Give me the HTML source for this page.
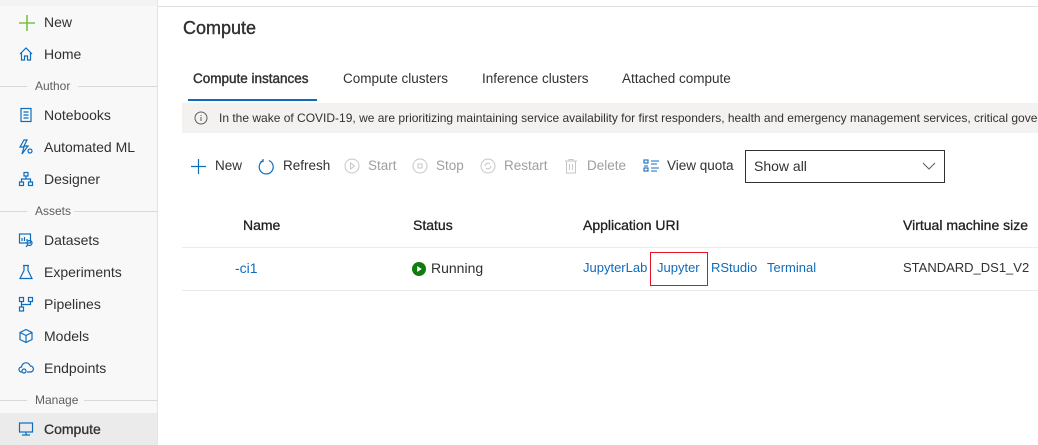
<!DOCTYPE html>
<html><head><meta charset="utf-8"><style>
*{margin:0;padding:0;box-sizing:border-box}
body{width:1038px;height:445px;overflow:hidden;background:#fff;font-family:"Segoe UI","Liberation Sans",sans-serif;color:#323130;position:relative}
.abs{position:absolute;white-space:nowrap}
#side{position:absolute;left:0;top:0;width:158px;height:445px;background:#f8f8f8;border-right:1px solid #e4e4e4}
.it{position:absolute;left:0;width:157px;height:32px;font-size:14px;line-height:32px;padding-left:44px;color:#323130}
.it svg{position:absolute;left:18px;top:8px}
.lbl{position:absolute;left:0;width:157px;font-size:12px;color:#605e5c;line-height:14px}
.lbl:before{content:"";position:absolute;left:0;top:7px;width:27px;border-top:1px solid #d8d8d8}
.lbl span{position:absolute;left:35px;top:0}
.lbl i{position:absolute;top:7px;right:0;border-top:1px solid #d8d8d8}
.tb{position:absolute;top:157px;font-size:13.5px;line-height:18px}
.tb svg{position:absolute;left:0;top:1px}
.dis{color:#a19f9d}
a{color:#0f6cbd;text-decoration:none}
.th{font-size:14px;color:#201f1e;-webkit-text-stroke:0.3px #201f1e}
</style></head><body>
<div id="side">
<div style="position:absolute;left:0;top:0;width:157px;height:6px;background:#f3f3f3"></div>
<div class="it" style="top:6px"><svg width="18" height="18" viewBox="0 0 18 18"><path d="M9 1v16M1 9h16" stroke="#7cc243" stroke-width="1.6"/></svg>New</div>
<div class="it" style="top:38px"><svg width="16" height="16" viewBox="0 0 16 16" fill="none" stroke="#0f6cbd" stroke-width="1.2"><path d="M2 8L8 2l6 6M3.5 6.5V14h3v-4h3v4h3V6.5"/></svg>Home</div>
<div class="lbl" style="top:79px"><span>Author</span><i style="left:78px"></i></div>
<div class="it" style="top:99px"><svg width="16" height="16" viewBox="0 0 16 16" fill="none" stroke="#0f6cbd" stroke-width="1.2"><rect x="3" y="1.5" width="10" height="13"/><path d="M5.5 5h5M5.5 8h5M5.5 11h5"/></svg>Notebooks</div>
<div class="it" style="top:131px"><svg width="16" height="16" viewBox="0 0 16 16" fill="none" stroke="#0f6cbd" stroke-width="1.2"><path d="M6 1L2 8h4l-2 7 6-8H6l3-6z"/><circle cx="12" cy="12" r="2"/></svg>Automated ML</div>
<div class="it" style="top:163px"><svg width="16" height="16" viewBox="0 0 16 16" fill="none" stroke="#0f6cbd" stroke-width="1.2"><rect x="6" y="1.5" width="4" height="3.5"/><rect x="1.5" y="11" width="4" height="3.5"/><rect x="10.5" y="11" width="4" height="3.5"/><path d="M8 5v3M3.5 11V8h9v3"/></svg>Designer</div>
<div class="lbl" style="top:204px"><span>Assets</span><i style="left:74px"></i></div>
<div class="it" style="top:224px"><svg width="16" height="16" viewBox="0 0 16 16" fill="none" stroke="#0f6cbd" stroke-width="1.2"><rect x="1.5" y="2" width="11" height="9"/><path d="M4 9V6M6.5 9V5M9 9V7"/><circle cx="11.5" cy="11" r="2.5"/><path d="M9.8 12.8L8 15"/></svg>Datasets</div>
<div class="it" style="top:256px"><svg width="16" height="16" viewBox="0 0 16 16" fill="none" stroke="#0f6cbd" stroke-width="1.2"><path d="M5 1.5h6M6 1.5v5L2 14.5h12L10 6.5v-5"/></svg>Experiments</div>
<div class="it" style="top:288px"><svg width="16" height="16" viewBox="0 0 16 16" fill="none" stroke="#0f6cbd" stroke-width="1.2"><rect x="1.5" y="1.5" width="4" height="4"/><rect x="10.5" y="1.5" width="4" height="4"/><rect x="1.5" y="11" width="4" height="4"/><path d="M3.5 5.5V11M3.5 8.5h9V5.5"/></svg>Pipelines</div>
<div class="it" style="top:320px"><svg width="16" height="16" viewBox="0 0 16 16" fill="none" stroke="#0f6cbd" stroke-width="1.2"><path d="M8 1.5l6 3v7l-6 3-6-3v-7zM2 4.5l6 3 6-3M8 7.5v7"/></svg>Models</div>
<div class="it" style="top:352px"><svg width="16" height="16" viewBox="0 0 16 16" fill="none" stroke="#0f6cbd" stroke-width="1.2"><path d="M4 12H3.5a2.5 2.5 0 0 1 0-5 4.5 4.5 0 0 1 8.8-1 3 3 0 0 1 .2 6H9"/><circle cx="6" cy="11" r="2"/></svg>Endpoints</div>
<div class="lbl" style="top:393px"><span>Manage</span><i style="left:84px"></i></div>
<div class="it" style="top:413px;background:#ebebeb;-webkit-text-stroke:0.3px #323130"><svg width="16" height="16" viewBox="0 0 16 16" fill="none" stroke="#0f6cbd" stroke-width="1.2"><rect x="1.5" y="2" width="13" height="9"/><path d="M8 11v2.5M4 14h8"/></svg>Compute</div>
</div>
<div class="abs" style="left:158px;top:6px;width:880px;border-top:1px solid #e1e1e1"></div>
<div class="abs" style="left:183px;top:16px;font-size:18px;line-height:24px;-webkit-text-stroke:0.4px #323130">Compute</div>
<div class="abs" style="left:193px;top:70px;font-size:13.5px;line-height:18px;-webkit-text-stroke:0.4px #323130">Compute instances</div>
<div class="abs" style="left:343px;top:70px;font-size:13.5px;line-height:18px">Compute clusters</div>
<div class="abs" style="left:482px;top:70px;font-size:13.5px;line-height:18px">Inference clusters</div>
<div class="abs" style="left:622px;top:70px;font-size:13.5px;line-height:18px">Attached compute</div>
<div class="abs" style="left:188px;top:99px;width:129px;height:2px;background:#0f6cbd"></div>
<div class="abs" style="left:182px;top:103px;width:856px;height:30px;background:#f3f2f1;font-size:12px;line-height:30px;padding-left:37px;overflow:hidden">In the wake of COVID-19, we are prioritizing maintaining service availability for first responders, health and emergency management services, critical government
<svg style="position:absolute;left:12px;top:8px" width="14" height="14" viewBox="0 0 14 14" fill="none" stroke="#605e5c"><circle cx="7" cy="7" r="6"/><path d="M7 6v4M7 4v1"/></svg></div>
<div class="tb" style="left:190px;padding-left:25px"><svg width="17" height="17" viewBox="0 0 17 17"><path d="M8.5 1v15M1 8.5h15" stroke="#0f6cbd" stroke-width="1.2"/></svg>New</div>
<div class="tb" style="left:258px;padding-left:25px"><svg width="17" height="17" viewBox="0 0 17 17" fill="none" stroke="#0f6cbd" stroke-width="1.2"><path d="M11 2.5A7 7 0 1 1 5 2.7"/><path d="M5 1v2.5H2.5"/></svg>Refresh</div>
<div class="tb dis" style="left:344px;padding-left:24px"><svg width="16" height="16" viewBox="0 0 16 16" fill="none" stroke="#c8c6c4"><circle cx="8" cy="8" r="7"/><path d="M6.5 5v6l4-3z"/></svg>Start</div>
<div class="tb dis" style="left:412px;padding-left:24px"><svg width="16" height="16" viewBox="0 0 16 16" fill="none" stroke="#c8c6c4"><circle cx="8" cy="8" r="7"/><rect x="6" y="6" width="4" height="4"/></svg>Stop</div>
<div class="tb dis" style="left:480px;padding-left:24px"><svg width="16" height="16" viewBox="0 0 16 16" fill="none" stroke="#c8c6c4"><circle cx="8" cy="8" r="7"/><path d="M5 8a3 3 0 0 1 5-2M11 8a3 3 0 0 1-5 2"/></svg>Restart</div>
<div class="tb dis" style="left:563px;padding-left:24px"><svg width="16" height="16" viewBox="0 0 16 16" fill="none" stroke="#c8c6c4"><path d="M2 3h12M6 3V1.5h4V3M3.5 3v12h9V3M6.5 6v6M9.5 6v6"/></svg>Delete</div>
<div class="tb" style="left:643px;padding-left:24px"><svg width="17" height="16" viewBox="0 0 17 16" fill="none" stroke="#0f6cbd" stroke-width="1.1"><rect x="1" y="2" width="4" height="3"/><rect x="1" y="10" width="4" height="3"/><path d="M8 3h8M8 6h6M8 10h8M8 13h6M1 8h4"/></svg>View quota</div>
<div class="abs" style="left:745px;top:150px;width:200px;height:33px;border:1px solid #323130;font-size:14px;line-height:31px;padding-left:8px">Show all
<svg style="position:absolute;right:8px;top:10px" width="14" height="10" viewBox="0 0 14 10" fill="none" stroke="#605e5c"><path d="M1 2l6 6 6-6"/></svg></div>
<div class="abs th" style="left:243px;top:217px">Name</div>
<div class="abs th" style="left:413px;top:217px">Status</div>
<div class="abs th" style="left:583px;top:217px">Application URI</div>
<div class="abs th" style="left:903px;top:217px">Virtual machine size</div>
<div class="abs" style="left:182px;top:247px;width:856px;border-top:1px solid #edebe9"></div>
<div class="abs" style="left:182px;top:290px;width:856px;border-top:1px solid #edebe9"></div>
<div class="abs" style="left:235px;top:260px;font-size:14px"><a>-ci1</a></div>
<div class="abs" style="left:412px;top:260px;font-size:14px;padding-left:19px"><svg style="position:absolute;left:0;top:2px" width="14" height="14" viewBox="0 0 14 14"><circle cx="7" cy="7" r="7" fill="#107c10"/><path d="M5.2 4v6l4.5-3z" fill="#fff"/></svg>Running</div>
<div class="abs" style="left:583px;top:260px;font-size:13px"><a>JupyterLab</a></div>
<div class="abs" style="left:650px;top:252px;width:58px;height:34px;border:1px solid #e81123"></div>
<div class="abs" style="left:657px;top:260px;font-size:13px"><a>Jupyter</a></div>
<div class="abs" style="left:711px;top:260px;font-size:13px"><a>RStudio</a></div>
<div class="abs" style="left:767px;top:260px;font-size:13px"><a>Terminal</a></div>
<div class="abs" style="left:903px;top:260px;font-size:13px">STANDARD_DS1_V2</div>
</body></html>
